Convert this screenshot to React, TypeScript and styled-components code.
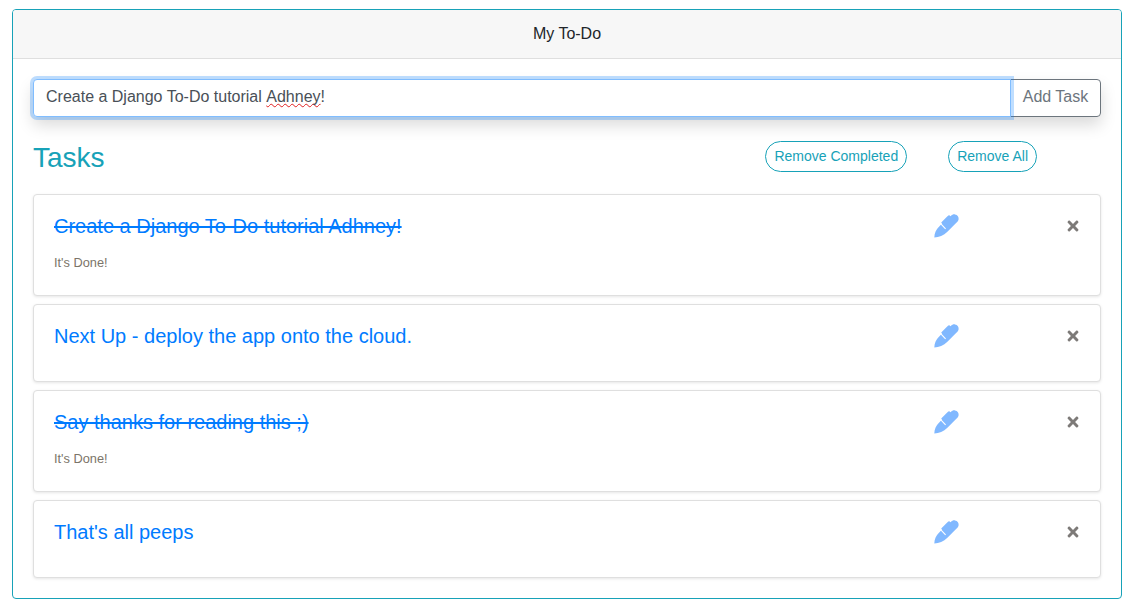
import styled, { createGlobalStyle } from "styled-components";
import { FaTimes } from "react-icons/fa";

const GlobalStyle = createGlobalStyle`
  html, body {
    margin: 0;
    padding: 0;
    background: #fff;
    font-family: "Liberation Sans", Arial, sans-serif;
    color: #212529;
  }
  * {
    box-sizing: border-box;
  }
`;

const Page = styled.div`
  padding: 9px 12px 0 12px;
`;

const Card = styled.div`
  height: 590px;
  border: 1px solid #17a2b8;
  border-radius: 4px;
  overflow: hidden;
`;

const CardHeader = styled.div`
  height: 49px;
  display: flex;
  align-items: center;
  justify-content: center;
  background: #f7f7f7;
  border-bottom: 1px solid #dfdfdf;
  font-size: 16px;
`;

const CardBody = styled.div`
  padding: 20px 20px 0 20px;
`;

const InputGroup = styled.div`
  display: flex;
  height: 38px;
  border-radius: 4px;
  box-shadow: 0 8px 16px rgba(0, 0, 0, 0.15);
`;

const TaskInput = styled.div`
  flex: 1;
  display: flex;
  align-items: center;
  padding: 0 12px 2px 12px;
  font-size: 16px;
  color: #495057;
  background: #fff;
  border: 1px solid #80bdff;
  border-radius: 4px 0 0 4px;
  box-shadow: 0 0 0 3px rgba(0, 123, 255, 0.25);
  white-space: pre;
  position: relative;
  z-index: 1;
`;

const Misspelled = styled.span`
  text-decoration: underline wavy #e02020 1px;
  text-underline-offset: 1px;
  text-decoration-skip-ink: none;
`;

const AddButton = styled.button`
  width: 91px;
  margin-left: -1px;
  padding: 0 0 2px 0;
  font-family: inherit;
  font-size: 16px;
  color: #6c757d;
  background: #fff;
  border: 1px solid #6c757d;
  border-radius: 0 4px 4px 0;
`;

const TasksHeader = styled.div`
  display: flex;
  align-items: flex-start;
  height: 32px;
  margin-top: 24px;
  margin-bottom: 21px;
`;

const Title = styled.h2`
  flex: 1;
  margin: 1px 0 0 0;
  font-size: 28px;
  font-weight: 400;
  line-height: 32px;
  color: #17a2b8;
`;

const PillButton = styled.button<{ $gap: number }>`
  height: 31px;
  padding: 0 8px 2px 8px;
  margin-right: ${(p) => p.$gap}px;
  font-family: inherit;
  font-size: 14px;
  color: #17a2b8;
  background: #fff;
  border: 1px solid #17a2b8;
  border-radius: 16px;
`;

const TaskList = styled.div`
  display: flex;
  flex-direction: column;
  gap: 8px;
`;

const TaskCard = styled.div<{ $done: boolean }>`
  height: ${(p) => (p.$done ? 102 : 78)}px;
  padding: 19px 20px 0 20px;
  background: #fff;
  border: 1px solid #dfdfdf;
  border-radius: 4px;
  box-shadow: 0 1px 3px rgba(0, 0, 0, 0.1);
`;

const TaskRow = styled.div`
  display: flex;
  align-items: center;
  height: 24px;
`;

const TaskTitle = styled.div<{ $done: boolean }>`
  flex: 1;
  font-size: 20px;
  line-height: 24px;
  color: #007bff;
  text-decoration: ${(p) => (p.$done ? "line-through" : "none")};
`;

const PenSvg = styled.svg`
  width: 25px;
  height: 24px;
  margin-right: 107px;
  color: #80b8ff;
`;

const CloseIcon = styled(FaTimes)`
  width: 14px;
  height: 16px;
  color: #7d7a78;
`;

const DoneNote = styled.div`
  margin-top: 18px;
  font-size: 12.8px;
  line-height: 14px;
  color: #7b7468;
`;

function PenIcon() {
  return (
    <PenSvg viewBox="0 0 25 24" aria-hidden="true">
      <path
        fill="currentColor"
        d="M0.3 23.4C0.5 19 2 15.6 5 12.7L8 9.6L7.2 8.6L13.2 2.6C14.2 1.6 14.8 1.2 15.6 1.4L16.6 2.2C18 0.8 19.4 0.2 21 0.4C23.6 0.8 25 3 24.6 5.2C24.4 6.6 23.6 7.6 22.6 8.6L13.4 17.8C9.6 21.6 5 23.2 0.3 23.4Z"
      />
      <path stroke="#fff" strokeWidth="1.1" d="M6.4 9.4L11.6 14.8" />
    </PenSvg>
  );
}

const tasks = [
  { id: 1, title: "Create a Django To-Do tutorial Adhney!", done: true },
  { id: 2, title: "Next Up - deploy the app onto the cloud.", done: false },
  { id: 3, title: "Say thanks for reading this ;)", done: true },
  { id: 4, title: "That's all peeps", done: false },
];

export default function App() {
  return (
    <Page>
      <GlobalStyle />
      <Card>
        <CardHeader>My To-Do</CardHeader>
        <CardBody>
          <InputGroup>
            <TaskInput>
              Create a Django To-Do tutorial <Misspelled>Adhney</Misspelled>!
            </TaskInput>
            <AddButton>Add Task</AddButton>
          </InputGroup>
          <TasksHeader>
            <Title>Tasks</Title>
            <PillButton $gap={41}>Remove Completed</PillButton>
            <PillButton $gap={64}>Remove All</PillButton>
          </TasksHeader>
          <TaskList>
            {tasks.map((task) => (
              <TaskCard key={task.id} $done={task.done}>
                <TaskRow>
                  <TaskTitle $done={task.done}>{task.title}</TaskTitle>
                  <PenIcon />
                  <CloseIcon />
                </TaskRow>
                {task.done && <DoneNote>It's Done!</DoneNote>}
              </TaskCard>
            ))}
          </TaskList>
        </CardBody>
      </Card>
    </Page>
  );
}
